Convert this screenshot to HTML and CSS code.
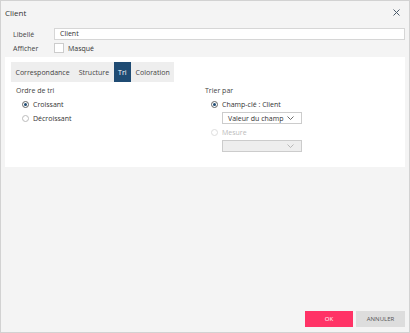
FILE: index.html
```html
<!DOCTYPE html>
<html lang="fr">
<head>
    <meta charset="UTF-8">
    <meta name="viewport" content="width=device-width, initial-scale=1.0">
    <title>Client</title>
    <link rel="stylesheet" href="styles.css">
</head>
<body>
<div class="dialog">
    <div class="header">
        <span class="title">Client</span>
        <svg class="close" width="7" height="7" viewBox="0 0 7 7"><path d="M0.5 0.5L6.5 6.5M6.5 0.5L0.5 6.5" stroke="#4a5a6a" stroke-width="1"/></svg>
    </div>

    <div class="fields">
        <label class="label">Libellé</label>
        <div class="input">Client</div>
        <label class="label">Afficher</label>
        <div class="check-row"><span class="checkbox"></span>Masqué</div>
    </div>

    <div class="panel">
        <div class="tabs">
            <span class="tab">Correspondance</span>
            <span class="tab">Structure</span>
            <span class="tab active">Tri</span>
            <span class="tab">Coloration</span>
        </div>
        <div class="columns">
            <div class="col">
                <div class="group-title">Ordre de tri</div>
                <div class="radio-row"><span class="radio checked"></span>Croissant</div>
                <div class="radio-row"><span class="radio"></span>Décroissant</div>
            </div>
            <div class="col">
                <div class="group-title">Trier par</div>
                <div class="radio-row"><span class="radio checked"></span>Champ-clé : Client</div>
                <div class="select">Valeur du champ
                    <svg width="7" height="4" viewBox="0 0 7 4"><path d="M0.5 0.5L3.5 3.5L6.5 0.5" fill="none" stroke="#444" stroke-width="0.8"/></svg>
                </div>
                <div class="radio-row disabled"><span class="radio"></span>Mesure</div>
                <div class="select disabled">
                    <svg width="7" height="4" viewBox="0 0 7 4"><path d="M0.5 0.5L3.5 3.5L6.5 0.5" fill="none" stroke="#aaa" stroke-width="0.8"/></svg>
                </div>
            </div>
        </div>
    </div>

    <div class="footer">
        <button class="btn ok">OK</button>
        <button class="btn cancel">ANNULER</button>
    </div>
</div>
</body>
</html>
```

FILE: styles.css
```css
body {
    margin: 0;
    font-family: "Open Sans", "Noto Sans", sans-serif;
    font-size: 7px;
    color: #333;
}

.dialog {
    width: 410px;
    height: 333px;
    box-sizing: border-box;
    border: 1px solid #d2d2d2;
    background-color: #f4f4f4;
    display: flex;
    flex-direction: column;
}

.header {
    height: 22px;
    display: flex;
    justify-content: space-between;
    align-items: center;
    padding: 0 9px 0 4px;
}

.title {
    font-size: 8px;
    color: #333;
}

.fields {
    display: grid;
    grid-template-columns: 41px 1fr;
    row-gap: 3px;
    align-items: center;
    padding: 5px 4px 0 12px;
}

.label {
    color: #444;
}

.input {
    height: 12px;
    box-sizing: border-box;
    line-height: 10px;
    background-color: white;
    border: 1px solid #d6d6d6;
    padding: 0 5px;
}

.check-row {
    display: flex;
    align-items: center;
    gap: 4px;
}

.checkbox {
    width: 8px;
    height: 8px;
    background-color: white;
    border: 1px solid #ccc;
}

.panel {
    margin: 4px 4px 0 4px;
    height: 110px;
    box-sizing: border-box;
    background-color: white;
    padding: 5px 6px;
}

.tabs {
    display: inline-flex;
    background-color: #eeeeee;
    height: 20px;
    align-items: stretch;
}

.tab {
    display: flex;
    align-items: center;
    padding: 0 4.5px;
    color: #444;
}

.tab.active {
    background-color: #1f4b73;
    color: white;
}

.columns {
    display: flex;
    padding: 3px 0 0 5px;
}

.col {
    width: 189px;
    display: flex;
    flex-direction: column;
    gap: 2px;
}

.group-title {
    color: #444;
    height: 11px;
    line-height: 11px;
}

.radio-row {
    display: flex;
    align-items: center;
    gap: 4px;
    height: 12px;
    padding-left: 6px;
}

.radio {
    width: 5px;
    height: 5px;
    border-radius: 50%;
    border: 1px solid #bbb;
    position: relative;
}

.radio.checked {
    border-color: #666;
}

.radio.checked::after {
    content: "";
    position: absolute;
    left: 1px;
    top: 1px;
    width: 3px;
    height: 3px;
    border-radius: 50%;
    background-color: #1f4b73;
}

.radio-row.disabled {
    color: #bbb;
}

.radio-row.disabled .radio {
    border-color: #ddd;
}

.select {
    margin-left: 17px;
    width: 80px;
    height: 12px;
    box-sizing: border-box;
    border: 1px solid #ccc;
    display: flex;
    align-items: center;
    justify-content: space-between;
    padding: 0 7px 0 5px;
}

.select.disabled {
    background-color: #eeeeee;
    justify-content: flex-end;
}

.footer {
    margin-top: auto;
    display: flex;
    justify-content: flex-end;
    gap: 3px;
    padding: 0 4px 5px 0;
}

.btn {
    font-family: inherit;
    font-size: 6px;
    border: none;
    height: 16px;
    width: 48px;
    padding: 0;
}

.ok {
    background-color: #ff3366;
    color: white;
}

.cancel {
    background-color: #dddddd;
    color: #555;
    width: 49px;
}
```
